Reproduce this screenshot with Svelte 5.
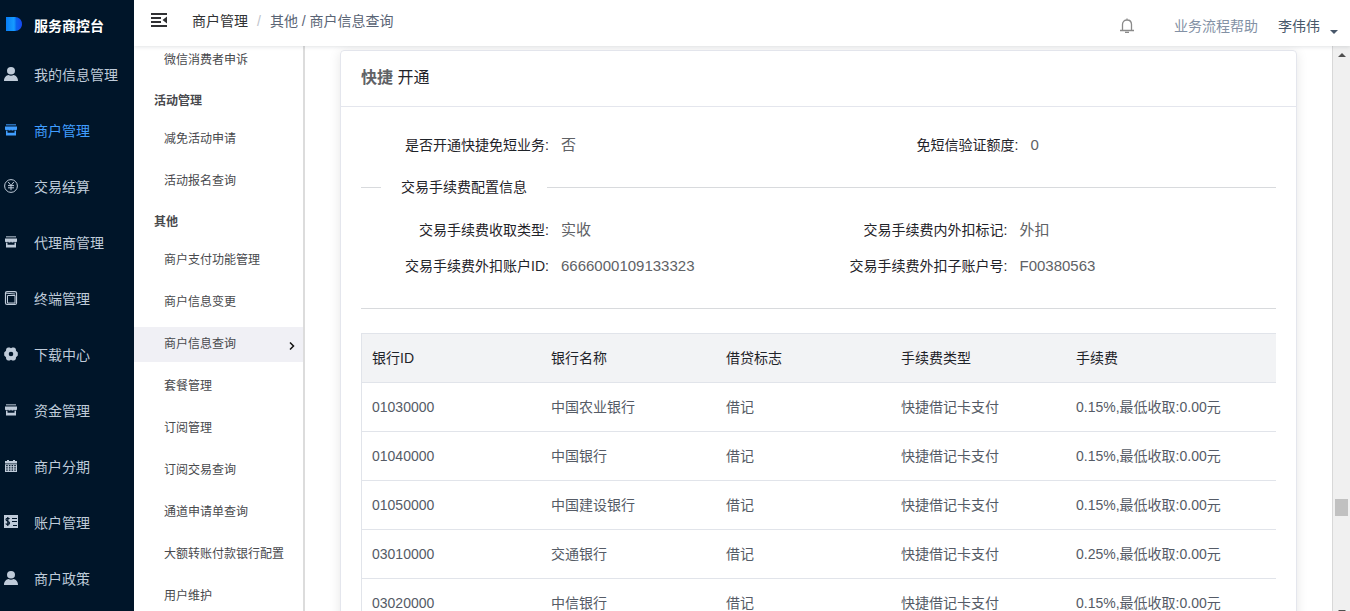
<script lang="ts">
  interface MenuItem {
    icon: string;
    label: string;
    active?: boolean;
  }

  const menu: MenuItem[] = [
    { icon: 'user', label: '我的信息管理' },
    { icon: 'shop', label: '商户管理', active: true },
    { icon: 'yen', label: '交易结算' },
    { icon: 'shop', label: '代理商管理' },
    { icon: 'terminal', label: '终端管理' },
    { icon: 'gear', label: '下载中心' },
    { icon: 'shop', label: '资金管理' },
    { icon: 'calendar', label: '商户分期' },
    { icon: 'account', label: '账户管理' },
    { icon: 'user', label: '商户政策' },
  ];

  const groups = [
    { title: '', items: ['微信消费者申诉'] },
    { title: '活动管理', items: ['减免活动申请', '活动报名查询'] },
    {
      title: '其他',
      items: [
        '商户支付功能管理',
        '商户信息变更',
        '商户信息查询',
        '套餐管理',
        '订阅管理',
        '订阅交易查询',
        '通道申请单查询',
        '大额转账付款银行配置',
        '用户维护',
      ],
    },
  ];

  let current = $state('商户信息查询');

  const feeFields = [
    ['交易手续费收取类型', '实收'],
    ['交易手续费内外扣标记', '外扣'],
    ['交易手续费外扣账户ID', '6666000109133323'],
    ['交易手续费外扣子账户号', 'F00380563'],
  ];

  const banks = [
    ['01030000', '中国农业银行', '借记', '快捷借记卡支付', '0.15%,最低收取:0.00元'],
    ['01040000', '中国银行', '借记', '快捷借记卡支付', '0.15%,最低收取:0.00元'],
    ['01050000', '中国建设银行', '借记', '快捷借记卡支付', '0.15%,最低收取:0.00元'],
    ['03010000', '交通银行', '借记', '快捷借记卡支付', '0.25%,最低收取:0.00元'],
    ['03020000', '中信银行', '借记', '快捷借记卡支付', '0.15%,最低收取:0.00元'],
  ];
</script>

{#snippet icon(name: string)}
  <svg class="icon" viewBox="0 0 14 14" aria-hidden="true">
    {#if name === 'user'}
      <ellipse cx="7" cy="3.8" rx="4" ry="3.8" />
      <path d="M0 14c0-4 2.5-5.6 4.4-6 1.6 1 3.6 1 5.2 0C11.500 8.400 14 10 14 14z" />
    {:else if name === 'shop'}
      <path d="M2 1h10v1.500H2z" opacity=".65" />
      <path d="M1 3.500h12v2.300c0 1-.6 1.700-1.500 1.700S10 7 10 6.200c0 .8-.6 1.300-1.500 1.300S7 7 7 6.200c0 .8-.6 1.300-1.500 1.300S4 7 4 6.200c0 .8-.6 1.300-1.500 1.300S1 6.800 1 5.800z" />
      <path d="M2 8h1.500v1.700h7V8H12v4.500H2z" />
    {:else if name === 'yen'}
      <g fill="none" stroke="currentColor">
        <circle cx="7" cy="7" r="6.400" />
        <path d="M4.200 3 7 6.500 9.800 3M7 6.500V11.200M4 6.600h6M4 8.800h6" />
      </g>
    {:else if name === 'terminal'}
      <g fill="none" stroke="currentColor">
        <rect x="1.500" y=".6" width="11" height="12.800" rx="1.500" stroke-width="1.200" />
        <path d="M2 2.200l9 .8M3.500 4.500h7.500V12h-7.500z" />
      </g>
    {:else if name === 'gear'}
      <path
        fill-rule="evenodd"
        d="M3.800.5h2L7 1.300 8.200.5h2l1.600 1.200.2 2L13.800 5.500v3L12 10.300l-.2 2-1.600 1.200h-2L7 12.700l-1.200.8h-2l-1.600-1.200-.2-2L.2 8.500v-3L2 3.700l.2-2zM7 4.700a2.300 2.300 0 1 0 0 4.600 2.300 2.300 0 0 0 0-4.600z"
      />
    {:else if name === 'calendar'}
      <path
        fill-rule="evenodd"
        d="M1 2h2V1h2v1h4V1h2v1h2v2.500H1zM1 5.200h12V13H1zM2.200 6v1.200h1.500V6zm2.700 0v1.200h1.500V6zm2.700 0v1.200h1.500V6zm2.700 0v1.200h1.500V6zM2.200 8.300v1.200h1.500V8.300zm2.700 0v1.200h1.500V8.300zm2.700 0v1.200h1.500V8.300zm2.700 0v1.200h1.500V8.300zM2.200 10.600v1.200h1.500v-1.200zm2.700 0v1.200h1.500v-1.200zm2.700 0v1.200h1.500v-1.200zm2.700 0v1.200h1.500v-1.200z"
      />
    {:else if name === 'account'}
      <path d="M0 0h14v13H0z" />
      <g class="cut">
        <path d="M5.500 4C5 3 2 2.800 2 4.500c0 1.900 3.500 1.500 3.500 3.500 0 1.700-3 1.800-3.700.4M3.800 2v9M8 3.500h5M8 6.500h5M9 10.500h4" />
      </g>
    {/if}
  </svg>
{/snippet}

<div class="layout">
  <aside class="sidebar">
    <div class="brand">
      <svg class="logo" viewBox="0 0 16 14" aria-hidden="true">
        <defs>
          <linearGradient id="logo-fill">
            <stop offset="0" stop-color="#087df5" />
            <stop offset=".5" stop-color="#169cff" />
            <stop offset=".65" stop-color="#0964f0" />
            <stop offset="1" stop-color="#1747ef" />
          </linearGradient>
        </defs>
        <path d="M0 0h9c4 0 7 3 7 7s-3 7-7 7H0z" fill="url(#logo-fill)" />
      </svg>
      <span>服务商控台</span>
    </div>
    <nav>
      {#each menu as item}
        <a href="#menu" class="menu-item" class:active={item.active}>
          {@render icon(item.icon)}
          <span>{item.label}</span>
        </a>
      {/each}
    </nav>
  </aside>

  <div class="main">
    <header class="topbar">
      <button class="fold" aria-label="收起菜单">
        <svg viewBox="0 0 16 14" aria-hidden="true">
          <path d="M0 0h16v2H0zM0 4h10v2H0zM0 8h10v2H0zM0 12h16v2H0zM16 3.500v7L11.500 7z" />
        </svg>
      </button>
      <div class="breadcrumb">
        <a href="#merchant">商户管理</a>
        <span class="slash">/</span>
        <span>其他 / 商户信息查询</span>
      </div>
      <div class="tools">
        <button class="bell" aria-label="消息">
          <svg viewBox="0 0 14 16" aria-hidden="true">
            <path d="M2.500 12V6.500C2.500 3.500 4.500 2 7 2s4.500 1.500 4.500 4.500V12M0 12.500h14M7 .5V2M5 14.300h4" />
          </svg>
        </button>
        <a href="#help" class="help">业务流程帮助</a>
        <button class="account">
          <span>李伟伟</span>
          <i class="caret"></i>
        </button>
      </div>
    </header>

    <div class="body">
      <nav class="submenu">
        {#each groups as group}
          {#if group.title}
            <h2>{group.title}</h2>
          {/if}
          {#each group.items as item}
            <a href="#sub" class:current={current === item} onclick={() => (current = item)}>
              {item}
              {#if current === item}
                <svg viewBox="0 0 6 8" aria-hidden="true"><path d="m1 .5 3.500 3.500L1 7.500" /></svg>
              {/if}
            </a>
          {/each}
        {/each}
      </nav>

      <main class="content">
        <section class="card">
          <h1><strong>快捷</strong> 开通</h1>
          <div class="card-body">
            <dl class="fields wide">
              <div><dt>是否开通快捷免短业务:</dt><dd>否</dd></div>
              <div><dt>免短信验证额度:</dt><dd>0</dd></div>
            </dl>
            <div class="divider"><span>交易手续费配置信息</span></div>
            <dl class="fields">
              {#each feeFields as [label, value]}
                <div><dt>{label}:</dt><dd>{value}</dd></div>
              {/each}
            </dl>
            <hr />
            <table>
              <colgroup>
                <col class="col-id" />
                <col class="col" />
                <col class="col" />
                <col class="col" />
                <col />
              </colgroup>
              <thead>
                <tr>
                  <th>银行ID</th>
                  <th>银行名称</th>
                  <th>借贷标志</th>
                  <th>手续费类型</th>
                  <th>手续费</th>
                </tr>
              </thead>
              <tbody>
                {#each banks as bank}
                  <tr>
                    {#each bank as cell}
                      <td>{cell}</td>
                    {/each}
                  </tr>
                {/each}
              </tbody>
            </table>
          </div>
        </section>
      </main>

      <div class="scrollbar" aria-hidden="true">
        <i class="arrow up"></i>
        <i class="thumb"></i>
        <i class="arrow down"></i>
      </div>
    </div>
  </div>
</div>

<style>
  :global(body) {
    margin: 0;
    overflow: hidden;
    font-family: 'Liberation Sans', 'Noto Sans CJK SC', sans-serif;
    font-size: 14px;
    line-height: 20px;
    color: #1f2329;
  }

  .layout {
    display: flex;
    height: 100vh;
    overflow: hidden;
    background: #fff;
  }

  a {
    color: inherit;
    text-decoration: none;
  }

  button {
    padding: 0;
    border: 0;
    background: none;
    font: inherit;
    color: inherit;
    cursor: pointer;
  }

  svg {
    display: block;
    flex: none;
  }

  /* Sidebar */
  .sidebar {
    flex: none;
    width: 134px;
    overflow: hidden;
    background: #001529;
    color: #bfcbd9;
    white-space: nowrap;
  }

  .brand {
    display: flex;
    align-items: center;
    gap: 12px;
    box-sizing: border-box;
    height: 47px;
    padding: 4px 0 0 6px;
    color: #fff;
    font-weight: bold;
  }

  .logo {
    width: 16px;
    height: 14px;
    margin-bottom: 4px;
  }

  .menu-item {
    display: flex;
    align-items: center;
    gap: 16px;
    height: 56px;
    padding-left: 4px;
  }

  .menu-item.active {
    color: #409eff;
  }

  .icon {
    width: 14px;
    height: 14px;
    margin-bottom: 2px;
    fill: currentColor;
  }

  .cut {
    fill: none;
    stroke: #001529;
    stroke-width: 1.2;
  }

  /* Top bar */
  .main {
    display: flex;
    flex: 1;
    flex-direction: column;
    min-width: 0;
  }

  .topbar {
    position: relative;
    z-index: 1;
    display: flex;
    flex: none;
    align-items: center;
    box-sizing: border-box;
    height: 46px;
    padding: 0 12px 4px 17px;
    background: #fff;
    box-shadow: 0 1px 4px rgba(0, 21, 41, 0.12);
  }

  .fold svg {
    width: 16px;
    height: 14px;
    margin-bottom: 2px;
    fill: #303133;
  }

  .breadcrumb {
    display: flex;
    gap: 9px;
    margin-left: 25px;
    color: #5a6475;
  }

  .breadcrumb a {
    color: #303133;
  }

  .slash {
    color: #c0c4cc;
  }

  .tools {
    display: flex;
    align-items: center;
    margin-left: auto;
    padding-top: 10px;
  }

  .bell svg {
    width: 14px;
    height: 16px;
    fill: none;
    stroke: #8a8a8a;
    stroke-width: 1.3;
  }

  .help {
    margin: 0 20px 0 40px;
    color: #8391a5;
  }

  .account {
    display: flex;
    align-items: flex-end;
    gap: 10px;
    color: #48576a;
  }

  .caret {
    margin-bottom: 2px;
    border: 4px solid transparent;
    border-top-color: #48576a;
    border-bottom: 0;
  }

  .body {
    display: flex;
    flex: 1;
    min-height: 0;
  }

  /* Second level menu */
  .submenu {
    flex: none;
    width: 169px;
    overflow: hidden;
    border-right: 2px solid #dcdcdc;
    color: #48494d;
    font-size: 12px;
    white-space: nowrap;
  }

  .submenu h2 {
    box-sizing: border-box;
    height: 37px;
    margin: 0;
    padding: 10px 0 0 20px;
    color: #48494d;
    font-size: 12px;
  }

  .submenu a {
    display: flex;
    align-items: center;
    justify-content: space-between;
    box-sizing: border-box;
    height: 35px;
    margin: 4px 0 7px;
    padding: 0 8px 2px 30px;
  }

  .submenu a + h2 {
    margin-top: -4px;
  }

  .submenu a:first-child {
    margin-top: -3px;
  }

  .submenu a.current {
    background: #f0f0f5;
  }

  .submenu svg {
    width: 6px;
    height: 8px;
    margin-top: 4px;
    fill: none;
    stroke: #111;
    stroke-width: 1.5;
  }

  /* Content */
  .content {
    flex: 1;
    min-width: 0;
    padding: 4px 35px 0;
    overflow: hidden;
  }

  .card {
    border: 1px solid #e4e6ed;
    border-radius: 4px;
    box-shadow: 0 2px 12px rgba(0, 0, 0, 0.1);
  }

  h1 {
    margin: 0;
    padding: 15px 20px 16px;
    border-bottom: 1px solid #e4e6ed;
    font-size: 16px;
    font-weight: normal;
    line-height: 24px;
  }

  h1 strong {
    color: #606266;
  }

  .card-body {
    padding: 20px;
  }

  .fields {
    display: grid;
    grid-template-columns: 1fr 1fr;
    column-gap: 2px;
    margin: 0;
  }

  .fields.wide {
    column-gap: 24px;
  }

  .fields div {
    display: flex;
    height: 36px;
    line-height: 36px;
  }

  dt {
    box-sizing: border-box;
    width: 200px;
    padding-right: 12px;
    text-align: right;
    white-space: nowrap;
  }

  dd {
    margin: 0;
    color: #606266;
    font-size: 15px;
  }

  .divider {
    display: flex;
    align-items: center;
    gap: 20px;
    margin: 14px 0 15px;
  }

  .divider::before,
  .divider::after {
    content: '';
    width: 20px;
    height: 1px;
    background: #d8dadd;
  }

  .divider::after {
    flex: 1;
  }

  hr {
    height: 1px;
    margin: 24px 0;
    border: 0;
    background: #d8dadd;
  }

  table {
    width: 100%;
    table-layout: fixed;
    border-collapse: separate;
    border-spacing: 0;
    border: 1px solid #e1e4ea;
    border-width: 1px 0 0 1px;
    color: #555b66;
  }

  .col-id {
    width: 179px;
  }

  .col {
    width: 175px;
  }

  th,
  td {
    height: 48px;
    padding: 0 10px;
    border-bottom: 1px solid #e1e4ea;
    text-align: left;
    white-space: nowrap;
  }

  th {
    background: #f2f3f5;
    color: #1f2329;
    font-weight: normal;
  }

  /* Scroll track */
  .scrollbar {
    display: flex;
    flex: none;
    flex-direction: column;
    align-items: center;
    justify-content: space-between;
    box-sizing: border-box;
    width: 18px;
    padding-top: 7px;
    border-left: 1px solid #d8d8d8;
    background: #f0f0f0;
  }

  .arrow {
    border: 4px solid transparent;
  }

  .arrow.up {
    border-top: 0;
    border-bottom-color: #505050;
  }

  .arrow.down {
    margin-bottom: -3px;
    border-top-color: #505050;
    border-bottom: 0;
  }

  .thumb {
    width: 13px;
    height: 17px;
    margin-top: auto;
    margin-bottom: 94px;
    background: #c1c1c1;
  }
</style>
